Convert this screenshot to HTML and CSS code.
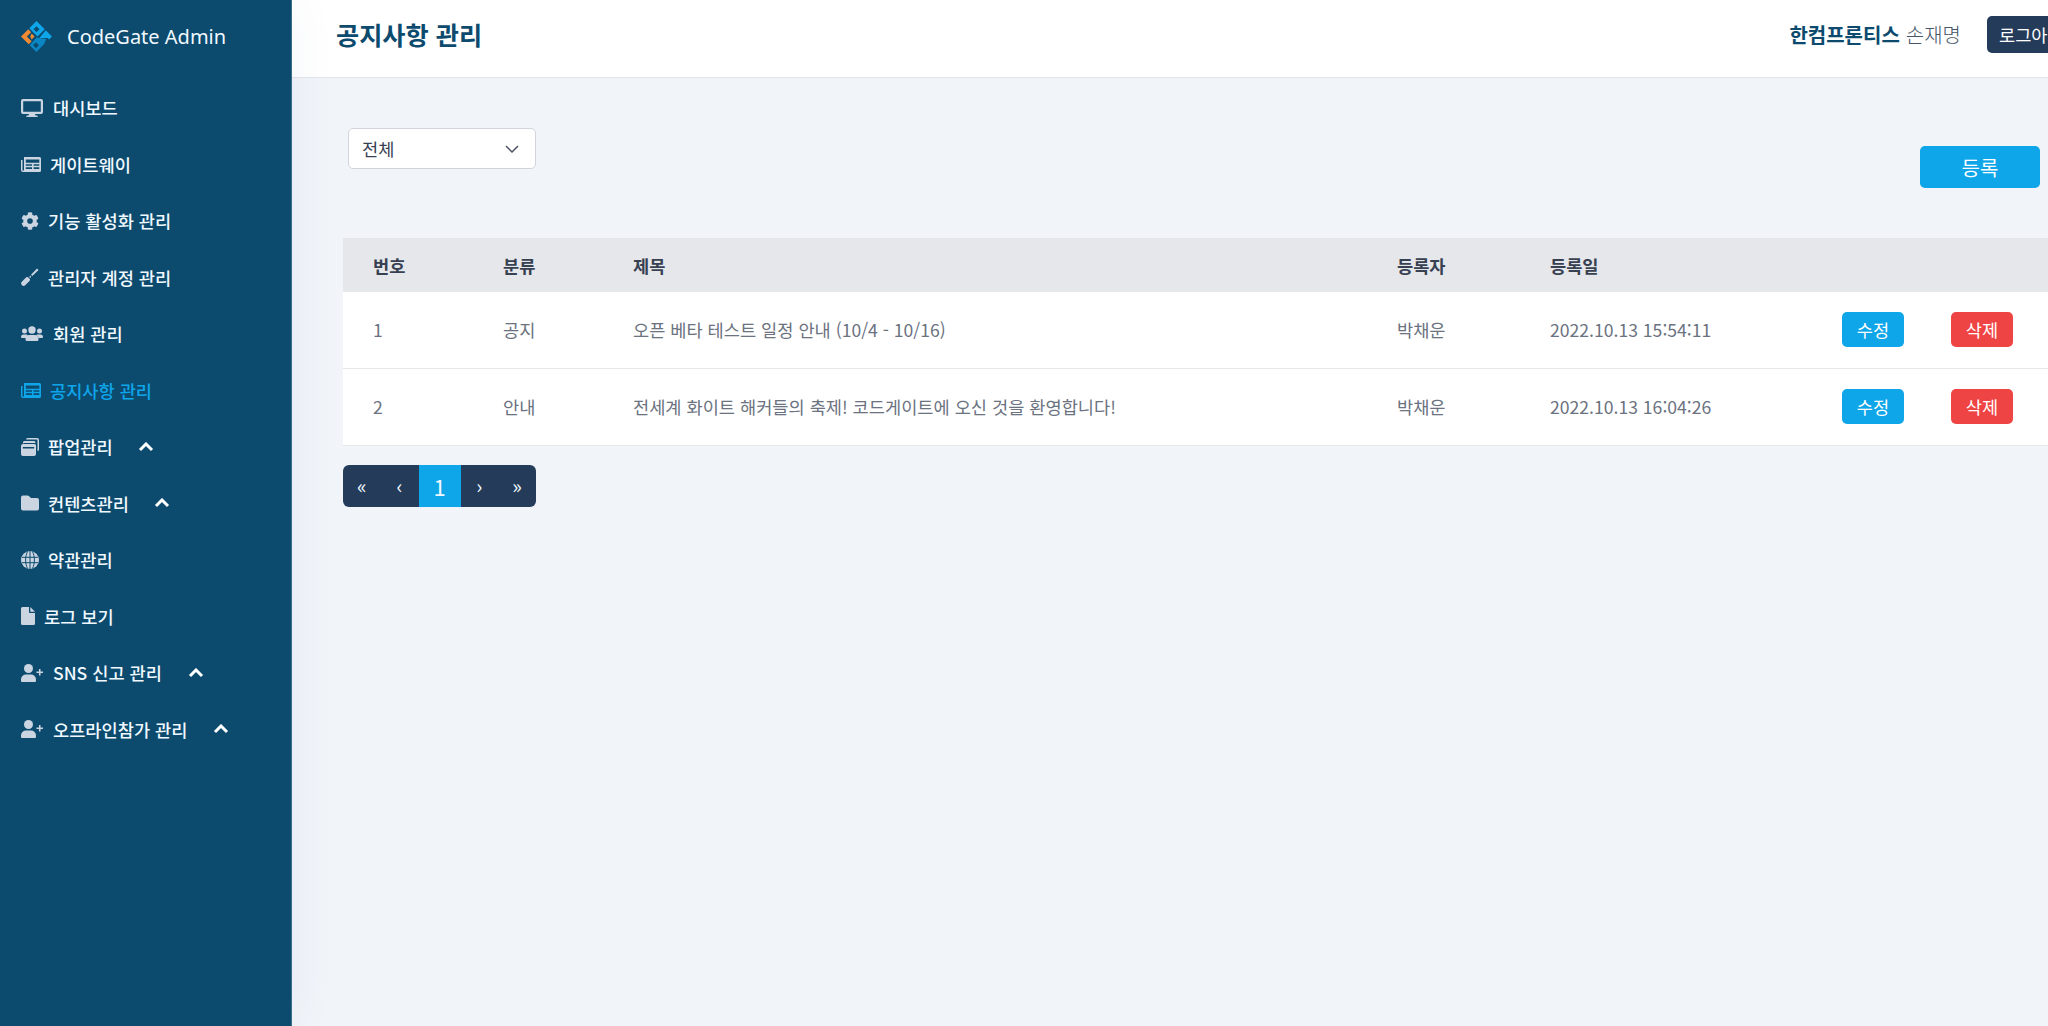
FILE: index.html
```html
<!DOCTYPE html>
<html lang="ko">
<head>
    <meta charset="UTF-8">
    <meta name="viewport" content="width=device-width, initial-scale=1.0">
    <title>공지사항 관리</title>
    <link rel="stylesheet" href="styles.css">
</head>
<body>

<aside class="sidebar">
    <div class="brand">
        <svg class="brand-logo" viewBox="0 0 32 32">
            <path fill="#0ea5e9" fill-rule="evenodd" d="M16 0l8.500 8.500-7.500 7.500-8.500-8.500zM16 5.500L13 8.500l3 3 3-3z"/>
            <path fill="#0ea5e9" d="M25.500 9.500L32 16l-3 3-1.500-1.500H19z"/>
            <path fill="#f08a33" fill-rule="evenodd" d="M7.500 8.500l3 3L6 16l5 5-3 3-8-8zM11 13l3 3-3 3-1.500-3z"/>
            <path fill="#0b86c4" fill-rule="evenodd" d="M16 17l10 1.500-2 5L16 32l-7-7zM15.500 22l-3 3 3 3 3-3z"/>
        </svg>
        <span class="brand-name">CodeGate Admin</span>
    </div>
    <nav class="menu">
        <a class="menu-item">
            <svg class="icon icon-wide" viewBox="0 0 22 18"><path fill-rule="evenodd" d="M2 0h18a2 2 0 012 2v11a2 2 0 01-2 2h-6l.5 1.500H16a.75.75 0 010 1.500H6a.75.75 0 010-1.500h1.500L8 15H2a2 2 0 01-2-2V2a2 2 0 012-2zm.2 2.200v10.600h17.600V2.200z"/></svg>
            <span>대시보드</span>
        </a>
        <a class="menu-item menu-item-tight">
            <svg class="icon icon-news" viewBox="0 0 20 15"><use href="#news"/></svg>
            <span>게이트웨이</span>
        </a>
        <a class="menu-item menu-item-tighter">
            <svg class="icon icon-square" viewBox="0 0 512 512"><path d="M487 316l-42-25a190 190 0 000-70l42-25c5-3 7-9 5-14a246 246 0 00-54-94c-4-4-10-5-15-2l-42 24a190 190 0 00-61-35V27c0-6-4-10-9-12a248 248 0 00-109 0c-5 2-9 6-9 12v48a190 190 0 00-61 35L90 86c-5-3-11-2-15 2a246 246 0 00-54 94c-2 5 0 11 5 14l42 25a190 190 0 000 70l-42 25c-5 3-7 9-5 14 11 35 30 67 54 94 4 4 10 5 15 2l42-24a190 190 0 0061 35v48c0 6 4 10 9 12a248 248 0 00109 0c5-2 9-6 9-12v-48a190 190 0 0061-35l42 24c5 3 11 2 15-2a246 246 0 0054-94c2-5 0-11-5-14zM256 336a80 80 0 110-160 80 80 0 010 160z"/></svg>
            <span>기능 활성화 관리</span>
        </a>
        <a class="menu-item menu-item-tighter">
            <svg class="icon icon-square" viewBox="0 0 18 18"><path d="M16 .4l1.600 1.600-6.300 6-1.300-1.300zM9.300 7.800l1 1-1.200 1.200-1-1zM7 9.200l1.800 1.800c.4.700.2 1.500-.3 2L4.200 17.200c-.9.900-2.300.9-3.200 0l-.2-.2c-.9-.9-.9-2.300 0-3.200L5 9.500c.5-.5 1.300-.7 2-.3z"/></svg>
            <span>관리자 계정 관리</span>
        </a>
        <a class="menu-item">
            <svg class="icon icon-wide" viewBox="0 0 22 16"><circle cx="3.500" cy="5" r="2.500"/><circle cx="18.500" cy="5" r="2.500"/><circle cx="11" cy="4" r="3.700"/><path d="M0 11a2.500 2.500 0 012.500-2.500H5c.5 0 1 .1 1.400.4A5 5 0 004.700 12H1a1 1 0 01-1-1zM22 11a2.500 2.500 0 00-2.500-2.500H17c-.5 0-1 .1-1.400.4a5 5 0 011.700 3.100H21a1 1 0 001-1zM8 9h6a3.500 3.500 0 013.500 3.500v1a1.500 1.500 0 01-1.500 1.500H6a1.500 1.500 0 01-1.500-1.500v-1A3.500 3.500 0 018 9z"/></svg>
            <span>회원 관리</span>
        </a>
        <a class="menu-item menu-item-tight menu-item-active">
            <svg class="icon icon-news" viewBox="0 0 20 15"><use href="#news"/></svg>
            <span>공지사항 관리</span>
        </a>
        <a class="menu-item menu-item-tighter">
            <svg class="icon icon-square" viewBox="0 0 18 18"><path d="M5 1.500A1.500 1.500 0 016.500 0H16a2 2 0 012 2v9.500a1.500 1.500 0 01-1.500 1.500V2.500a1 1 0 00-1-1z"/><path d="M3 3h10a1.500 1.500 0 011.500 1.500V5H3.500A2 2 0 002 5.500 2 2 0 013 3z"/><path fill-rule="evenodd" d="M2 6h11.500A1.500 1.500 0 0115 7.500V16a2 2 0 01-2 2H2a2 2 0 01-2-2V8a2 2 0 012-2zm-.2 3v1.500h11.400V9z"/></svg>
            <span>팝업관리</span>
            <svg class="chevron" viewBox="0 0 16 10"><path d="M2 8l6-6 6 6"/></svg>
        </a>
        <a class="menu-item menu-item-tighter">
            <svg class="icon icon-square" viewBox="0 0 18 15"><path d="M2 0h4.500c.5 0 1 .2 1.400.6L10 2.500h6a2 2 0 012 2V13a2 2 0 01-2 2H2a2 2 0 01-2-2V2a2 2 0 012-2z"/></svg>
            <span>컨텐츠관리</span>
            <svg class="chevron" viewBox="0 0 16 10"><path d="M2 8l6-6 6 6"/></svg>
        </a>
        <a class="menu-item menu-item-tighter">
            <svg class="icon icon-square" viewBox="0 0 18 18"><circle cx="9" cy="9" r="9"/><path class="icon-lines" d="M1 6.300h16M1 11.700h16M9 0v18M6.500.5C4 5.500 4 12.500 6.500 17.500M11.500.5c2.500 5 2.500 12 0 17"/></svg>
            <span>약관관리</span>
        </a>
        <a class="menu-item menu-item-tighter">
            <svg class="icon icon-file" viewBox="0 0 14 18"><path d="M1.500 0H8v5a1 1 0 001 1h5v10.500a1.500 1.500 0 01-1.500 1.500h-11A1.500 1.500 0 010 16.500v-15A1.500 1.500 0 011.500 0zM9.300 0L14 4.700H9.300z"/></svg>
            <span>로그 보기</span>
        </a>
        <a class="menu-item">
            <svg class="icon icon-wide" viewBox="0 0 22 18"><use href="#user-plus"/></svg>
            <span>SNS 신고 관리</span>
            <svg class="chevron" viewBox="0 0 16 10"><path d="M2 8l6-6 6 6"/></svg>
        </a>
        <a class="menu-item">
            <svg class="icon icon-wide" viewBox="0 0 22 18"><use href="#user-plus"/></svg>
            <span>오프라인참가 관리</span>
            <svg class="chevron" viewBox="0 0 16 10"><path d="M2 8l6-6 6 6"/></svg>
        </a>
    </nav>
    <svg class="defs" width="0" height="0">
        <symbol id="news" viewBox="0 0 20 15"><path fill-rule="evenodd" d="M3 0h15.500A1.500 1.500 0 0120 1.500v12a1.500 1.500 0 01-1.500 1.500H2a2 2 0 01-2-2V3h1.500v10.500H3zm1.800 2.500v3.200h13.500V2.500zm0 4.800v1.500h6.200V7.300zm0 3v1.700h6.200v-1.700zm7.800-3v1.500h5.700V7.300zm0 3v1.700h5.700v-1.700z"/></symbol>
        <symbol id="user-plus" viewBox="0 0 22 18"><circle cx="7.500" cy="4.500" r="4.500"/><path d="M5 10.500h5a5 5 0 015 5V17a1 1 0 01-1 1H1a1 1 0 01-1-1v-1.500a5 5 0 015-5zM18 5h1.500v2.500H22V9h-2.500v2.500H18V9h-2.500V7.500H18z"/></symbol>
    </svg>
</aside>

<div class="page">
    <header class="topbar">
        <h1 class="page-title">공지사항 관리</h1>
        <div class="account">
            <span class="account-company">한컴프론티스</span>
            <span class="account-name">손재명</span>
            <button class="logout">로그아웃</button>
        </div>
    </header>

    <main class="content">
        <div class="toolbar">
            <div class="select">
                <span>전체</span>
                <svg class="select-arrow" viewBox="0 0 14 8"><path d="M1 1l6 6 6-6"/></svg>
            </div>
            <button class="btn-register">등록</button>
        </div>

        <table class="board">
            <thead>
            <tr>
                <th class="col-no">번호</th>
                <th class="col-type">분류</th>
                <th class="col-title">제목</th>
                <th class="col-writer">등록자</th>
                <th class="col-date">등록일</th>
                <th class="col-edit"></th>
                <th class="col-delete"></th>
            </tr>
            </thead>
            <tbody>
            <tr>
                <td>1</td>
                <td>공지</td>
                <td>오픈 베타 테스트 일정 안내 (10/4 - 10/16)</td>
                <td>박채운</td>
                <td>2022.10.13 15:54:11</td>
                <td><button class="btn-small btn-edit">수정</button></td>
                <td><button class="btn-small btn-delete">삭제</button></td>
            </tr>
            <tr>
                <td>2</td>
                <td>안내</td>
                <td>전세계 화이트 해커들의 축제! 코드게이트에 오신 것을 환영합니다!</td>
                <td>박채운</td>
                <td>2022.10.13 16:04:26</td>
                <td><button class="btn-small btn-edit">수정</button></td>
                <td><button class="btn-small btn-delete">삭제</button></td>
            </tr>
            </tbody>
        </table>

        <div class="pagination">
            <a class="page-link">«</a>
            <a class="page-link">‹</a>
            <a class="page-link page-link-current">1</a>
            <a class="page-link">›</a>
            <a class="page-link">»</a>
        </div>
    </main>
</div>

</body>
</html>
```

FILE: styles.css
```css
* {
    box-sizing: border-box;
}

html, body {
    height: 100%;
}

body {
    margin: 0;
    display: flex;
    overflow: hidden;
    font-family: "Noto Sans CJK KR", "Noto Sans", sans-serif;
    background-color: #f1f4f9;
    color: #6b7280;
}

button {
    font-family: inherit;
    border: none;
    color: #ffffff;
}

.sidebar {
    flex: 0 0 292px;
    background-color: #0c4a6e;
    box-shadow: 0 0 48px rgba(12, 74, 110, 0.05);
    border-right: 1px solid #3d6f8c;
    z-index: 1;
}

.brand {
    height: 72px;
    padding: 0 0 0 21px;
    display: flex;
    align-items: center;
    gap: 15px;
}

.brand-logo {
    width: 31px;
    height: 31px;
}

.brand-name {
    font-family: "Noto Sans", sans-serif;
    font-size: 20px;
    color: #f0f9ff;
}

.menu {
    display: flex;
    flex-direction: column;
    margin-top: 7.6px;
}

.menu-item {
    height: 56.5px;
    padding-left: 21px;
    display: flex;
    align-items: center;
    gap: 10px;
    font-size: 17.6px;
    font-weight: 500;
    color: #f0f9ff;
}

.menu-item-tight {
    gap: 9px;
}

.menu-item-tighter {
    gap: 9px;
}

.menu-item-active {
    color: #0ea5e9;
}

.icon {
    fill: #cbd5e1;
    flex: none;
}

.icon-lines {
    fill: none;
    stroke: #0c4a6e;
    stroke-width: 1;
}

.menu-item-active .icon {
    fill: #0ea5e9;
}

.icon-wide {
    width: 22px;
    height: 18px;
}

.icon-news {
    width: 20px;
    height: 15px;
}

.icon-square {
    width: 18px;
    height: 18px;
}

.icon-file {
    width: 14px;
    height: 18px;
}

.chevron {
    width: 16px;
    height: 10px;
    margin-left: 16px;
    fill: none;
    stroke: #ffffff;
    stroke-width: 3;
}

.page {
    flex: 0 0 1800px;
    min-width: 0;
    display: flex;
    flex-direction: column;
}

.topbar {
    flex: none;
    height: 78px;
    padding: 0 0 8px 44px;
    background-color: #ffffff;
    border-bottom: 1px solid #e2e5ea;
    display: flex;
    align-items: center;
    justify-content: space-between;
}

.page-title {
    margin: 0 0 2px;
    font-size: 25.2px;
    font-weight: 700;
    color: #0c4a6e;
}

.account {
    display: flex;
    align-items: center;
    font-size: 20px;
}

.account-company {
    font-weight: 700;
    color: #0c4a6e;
}

.account-name {
    margin-left: 6px;
    font-weight: 300;
    color: #475569;
}

.logout {
    width: 96px;
    height: 37px;
    margin-left: 26px;
    margin-right: 9px;
    background-color: #243b5a;
    border-radius: 5px;
    font-size: 17.6px;
    text-align: left;
    padding-left: 12px;
}

.content {
    padding: 50px 0 0 51px;
}

.toolbar {
    height: 110px;
    padding: 0 0 0 5px;
    display: flex;
    justify-content: space-between;
    align-items: flex-start;
    width: 1697px;
}

.select {
    width: 188px;
    height: 41px;
    padding: 0 16px 0 13px;
    background-color: #ffffff;
    border: 1px solid #d1d5db;
    border-radius: 5px;
    display: flex;
    align-items: center;
    justify-content: space-between;
    font-size: 17.6px;
    color: #374151;
}

.select-arrow {
    width: 14px;
    height: 8px;
    fill: none;
    stroke: #4b5563;
    stroke-width: 1.5;
}

.btn-register {
    width: 120px;
    height: 42px;
    margin-top: 18px;
    background-color: #0ea5e9;
    border-radius: 5px;
    font-size: 20px;
}

.board {
    width: 1749px;
    border-collapse: collapse;
    table-layout: fixed;
    font-size: 17.6px;
}

.board th {
    height: 54px;
    padding: 0 0 0 30px;
    background-color: #e5e7eb;
    text-align: left;
    font-weight: 700;
    color: #374151;
}

.board td {
    height: 76.5px;
    padding: 0 0 1px 30px;
    background-color: #ffffff;
    border-bottom: 1px solid #e5e7eb;
    font-weight: 400;
}

.col-no, .col-type {
    width: 130px;
}

.col-title {
    width: 764px;
}

.col-writer {
    width: 153px;
}

.col-date {
    width: 322px;
}

.col-edit {
    width: 109px;
}

.col-delete {
    width: 141px;
}

.board td:nth-child(6), .board td:nth-child(7) {
    padding-left: 0;
}

.btn-small {
    width: 62px;
    height: 35px;
    border-radius: 5px;
    font-size: 17.6px;
    padding: 0;
}

.btn-edit {
    background-color: #0ea5e9;
}

.btn-delete {
    background-color: #ef4444;
}

.pagination {
    display: inline-flex;
    width: 193px;
    height: 42px;
    margin-top: 19px;
    background-color: #243b5a;
    border-radius: 6px;
    overflow: hidden;
}

.page-link {
    flex: 1;
    display: flex;
    align-items: center;
    justify-content: center;
    color: #f0f9ff;
    font-size: 20px;
}

.page-link-current {
    flex: 0 0 42px;
    background-color: #0ea5e9;
    font-size: 22px;
}

.defs {
    position: absolute;
}
```
